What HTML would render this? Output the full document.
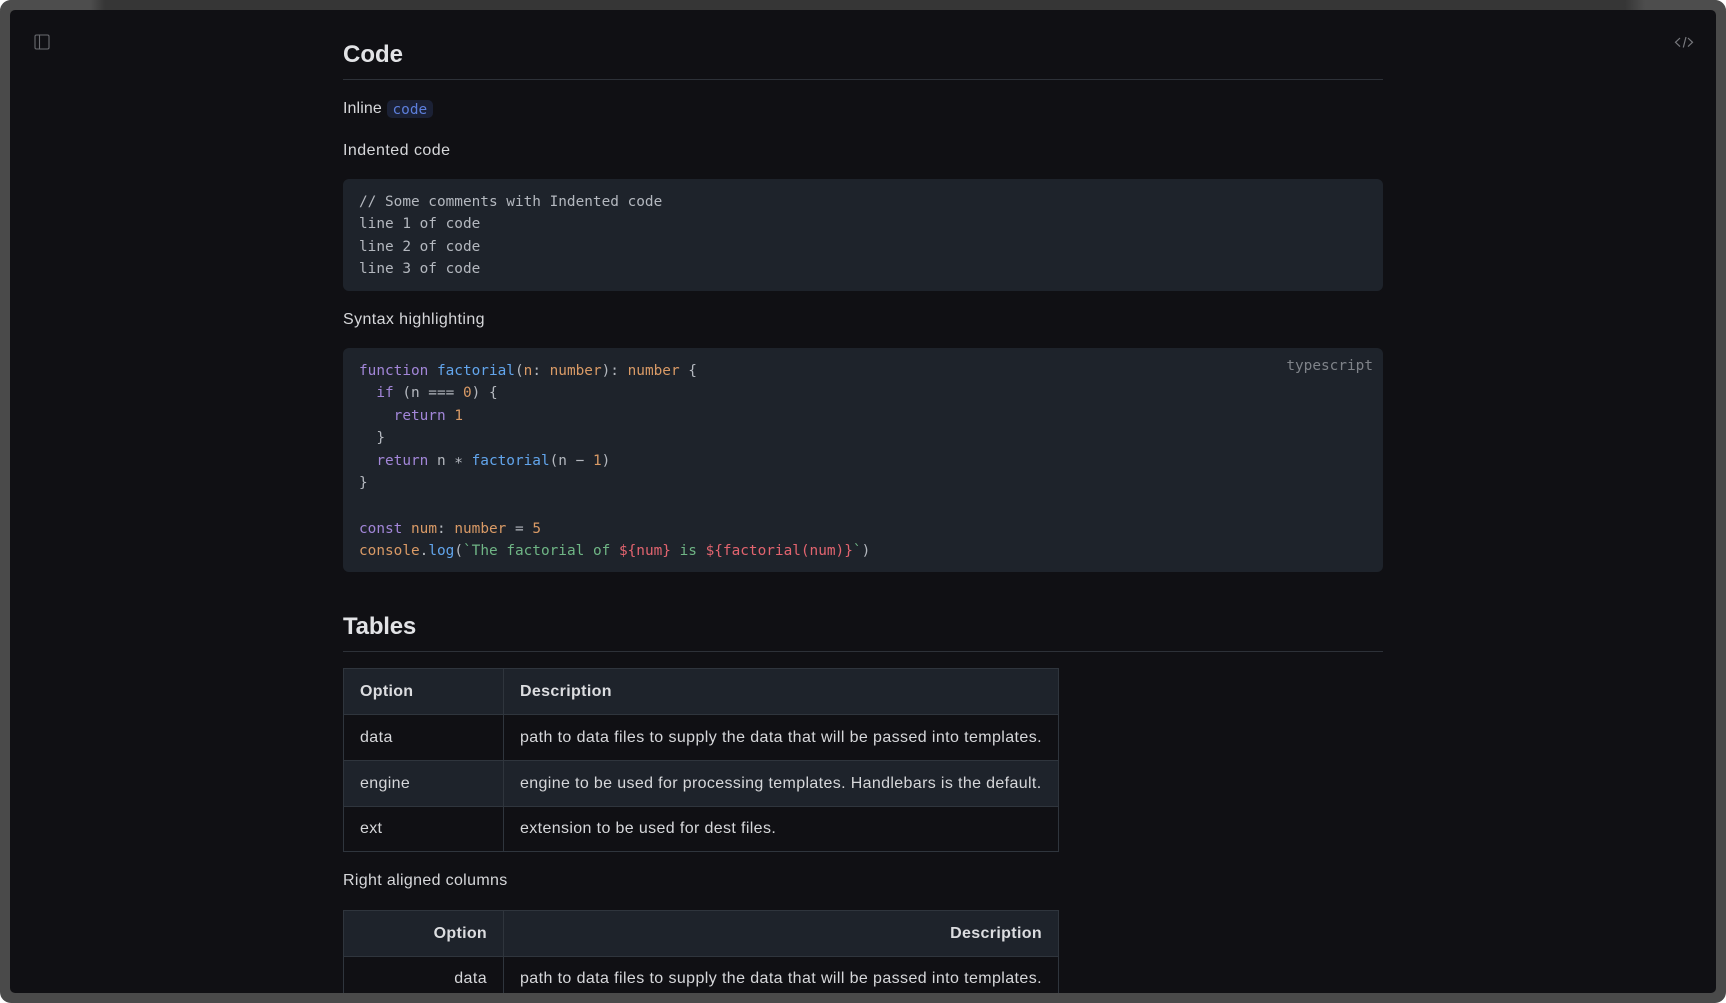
<!DOCTYPE html>
<html lang="en">
<head>
<meta charset="utf-8">
<title>Code</title>
<style>
html,body{margin:0;padding:0;width:1726px;height:1003px;overflow:hidden;background:#fff}
#frame{position:absolute;left:0;top:0;width:1726px;height:1003px;border-radius:11px;overflow:hidden;background:#4a4a4a}
#topbar{position:absolute;left:0;top:0;width:1726px;height:10px;background:linear-gradient(90deg,#4d4d4d 0,#4d4d4d 90px,#363636 105px,#363636 1625px,#4d4d4d 1645px,#4d4d4d 100%)}
#win{position:absolute;left:10px;top:10px;width:1706px;height:983px;background:#101014;border-radius:5px;overflow:hidden}
.c{position:absolute;left:-10px;top:-10px;width:1726px;height:1003px}
.t{position:absolute;white-space:pre;font-family:"Liberation Sans",sans-serif;font-size:16px;line-height:24px;color:#d6d7da}
.h{font-weight:700;font-size:24px;line-height:30px;color:#e2e3e6}
.b{font-weight:700;color:#dcdde0}
.m{position:absolute;white-space:pre;font-family:"DejaVu Sans Mono","Liberation Mono",monospace;font-size:14.4px;line-height:22px;color:#b4b8bf;left:359px}
.r{position:absolute;height:1px;background:#2d3138;left:343px;width:1040px}
.blk{position:absolute;left:343px;width:1040px;background:#1e232b;border-radius:6px}
.tb{position:absolute;left:343px;width:716px;box-sizing:border-box;border:1px solid #2f353d}
.row{position:absolute;left:0;width:714px;box-sizing:border-box}
.v{position:absolute;left:159px;top:0;bottom:0;width:1px;background:#2f353d}
.p{color:#a286d8}.f{color:#62a5ec}.o{color:#d99a66}.g{color:#6fb585}.e{color:#e2646f}
</style>
</head>
<body>
<div id="frame">
<div id="topbar"></div>
<div id="win">
<div class="c">

<svg style="position:absolute;left:34px;top:34px" width="17" height="17" viewBox="0 0 17 17" fill="none" stroke="#6a6b70" stroke-width="1.1"><rect x="1" y="1" width="14" height="14" rx="1.5"/><path d="M5.5 1V15"/></svg>
<svg style="position:absolute;left:1674px;top:34px" width="20" height="16" viewBox="0 0 20 16" fill="none" stroke="#77787d" stroke-width="1.2"><path d="M6 4L1.5 8.3L6 12.6M14 4L18.5 8.3L14 12.6M12 3L9.3 13.5"/></svg>

<div class="t h" style="left:343px;top:40px">Code</div>
<div class="r" style="top:79px"></div>
<div class="t" style="left:343px;top:97px;letter-spacing:.1px">Inline</div>
<div style="position:absolute;left:387px;top:100px;width:46px;height:18px;background:#1b2135;border-radius:5px"></div>
<div class="m" style="left:392.5px;top:99px;color:#5d7fdc">code</div>
<div class="t" style="left:343px;top:139px;letter-spacing:.47px">Indented code</div>

<div class="blk" style="top:179px;height:112px"></div>
<div class="m" style="top:191px">// Some comments with Indented code</div>
<div class="m" style="top:213px">line 1 of code</div>
<div class="m" style="top:236px">line 2 of code</div>
<div class="m" style="top:258px">line 3 of code</div>

<div class="t" style="left:343px;top:308px;letter-spacing:.4px">Syntax highlighting</div>

<div class="blk" style="top:348px;height:224px"></div>
<div class="m" style="left:auto;right:353px;top:355px;color:#7f8389">typescript</div>
<div class="m" style="top:360px"><span class="p">function</span> <span class="f">factorial</span>(<span class="o">n</span>: <span class="o">number</span>): <span class="o">number</span> {</div>
<div class="m" style="top:382px">  <span class="p">if</span> (n === <span class="o">0</span>) {</div>
<div class="m" style="top:405px">    <span class="p">return</span> <span class="o">1</span></div>
<div class="m" style="top:427px">  }</div>
<div class="m" style="top:450px">  <span class="p">return</span> n ∗ <span class="f">factorial</span>(n − <span class="o">1</span>)</div>
<div class="m" style="top:472px">}</div>
<div class="m" style="top:518px"><span class="p">const</span> <span class="o">num</span>: <span class="o">number</span> = <span class="o">5</span></div>
<div class="m" style="top:540px"><span class="o">console</span>.<span class="f">log</span>(<span class="g">`The factorial of </span><span class="e">${num}</span><span class="g"> is </span><span class="e">${factorial(num)}</span><span class="g">`</span>)</div>

<div class="t h" style="left:343px;top:612px;letter-spacing:-.2px">Tables</div>
<div class="r" style="top:651px"></div>

<div class="tb" style="top:668px;height:184px">
  <div class="row" style="top:0;height:46px;background:#1e232b;border-bottom:1px solid #2f353d"></div>
  <div class="row" style="top:46px;height:46px;border-bottom:1px solid #2f353d"></div>
  <div class="row" style="top:92px;height:46px;background:#1e232b;border-bottom:1px solid #2f353d"></div>
  <div class="v"></div>
</div>
<div class="t b" style="left:360px;top:680px;letter-spacing:.3px">Option</div>
<div class="t b" style="left:520px;top:680px;letter-spacing:.35px">Description</div>
<div class="t" style="left:360px;top:726px;letter-spacing:.4px">data</div>
<div class="t" style="left:520px;top:726px;letter-spacing:.4px">path to data files to supply the data that will be passed into templates.</div>
<div class="t" style="left:360px;top:772px;letter-spacing:.35px">engine</div>
<div class="t" style="left:520px;top:772px;letter-spacing:.36px">engine to be used for processing templates. Handlebars is the default.</div>
<div class="t" style="left:360px;top:817px;letter-spacing:.3px">ext</div>
<div class="t" style="left:520px;top:817px;letter-spacing:.37px">extension to be used for dest files.</div>

<div class="t" style="left:343px;top:869px;letter-spacing:.34px">Right aligned columns</div>

<div class="tb" style="top:910px;height:120px">
  <div class="row" style="top:0;height:46px;background:#1e232b;border-bottom:1px solid #2f353d"></div>
  <div class="v"></div>
</div>
<div class="t b" style="right:1239px;top:922px;letter-spacing:.3px">Option</div>
<div class="t b" style="right:684px;top:922px;letter-spacing:.35px">Description</div>
<div class="t" style="right:1239px;top:967px;letter-spacing:.4px">data</div>
<div class="t" style="left:520px;top:967px;letter-spacing:.4px">path to data files to supply the data that will be passed into templates.</div>

</div>
</div>
</div>
</body>
</html>
